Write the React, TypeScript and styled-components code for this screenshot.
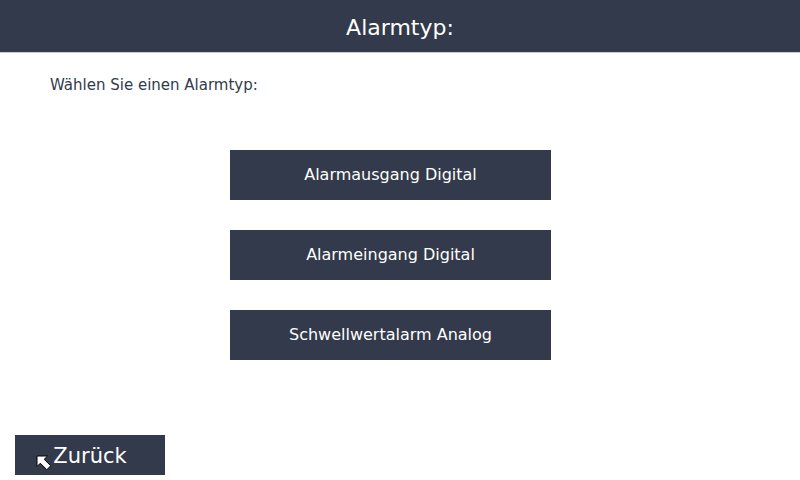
import * as React from 'react';
import styled, { createGlobalStyle } from 'styled-components';

const GlobalStyles = createGlobalStyle`
  html, body {
    margin: 0;
    padding: 0;
    background: #ffffff;
    font-family: 'DejaVu Sans', 'Liberation Sans', sans-serif;
  }

  *, *:before, *:after {
    box-sizing: border-box;
  }
`;

const Screen = styled.div`
  display: flex;
  flex-direction: column;
  width: 800px;
  height: 480px;
  overflow: hidden;
  background: #ffffff;
`;

const Header = styled.div`
  display: flex;
  justify-content: center;
  align-items: center;
  height: 53px;
  padding-top: 2px;
  background: #323a4b;
  border-bottom: 1px solid #c9ccd3;
  color: #ffffff;
  font-size: 22px;
`;

const Body = styled.div`
  display: flex;
  flex-direction: column;
  flex: 1;
`;

const Prompt = styled.div`
  margin: 23px 0 0 50px;
  color: #323a4b;
  font-size: 15px;
  line-height: 18px;
`;

const Options = styled.div`
  display: flex;
  flex-direction: column;
  gap: 30px;
  margin: 56px 0 0 230px;
`;

const OptionButton = styled.div`
  display: flex;
  justify-content: center;
  align-items: center;
  width: 321px;
  height: 50px;
  padding-bottom: 2px;
  background: #323a4b;
  color: #ffffff;
  font-size: 16px;
  cursor: pointer;
`;

const Footer = styled.div`
  display: flex;
  margin-top: auto;
  padding: 0 0 5px 15px;
`;

const BackButton = styled.div`
  position: relative;
  display: flex;
  justify-content: center;
  align-items: center;
  width: 150px;
  height: 40px;
  padding-top: 1px;
  background: #323a4b;
  color: #ffffff;
  font-size: 21px;
  cursor: pointer;
`;

const Pointer = styled.svg`
  position: absolute;
  left: 21px;
  top: 20px;
`;

const options = ['Alarmausgang Digital', 'Alarmeingang Digital', 'Schwellwertalarm Analog'];

export default function App() {
  return (
    <React.Fragment>
      <GlobalStyles />
      <Screen>
        <Header>Alarmtyp:</Header>
        <Body>
          <Prompt>Wählen Sie einen Alarmtyp:</Prompt>
          <Options>
            {options.map(label => (
              <OptionButton key={label}>{label}</OptionButton>
            ))}
          </Options>
          <Footer>
            <BackButton>
              Zurück
              <Pointer width="17" height="17" viewBox="0 0 17 17">
                <path
                  d="M1 1 L1 11.5 L4.3 8.2 L10.8 14.7 L14.7 10.8 L8.2 4.3 L11.5 1 Z"
                  fill="#ffffff"
                  stroke="#000000"
                  strokeWidth="1"
                  strokeLinejoin="miter"
                />
              </Pointer>
            </BackButton>
          </Footer>
        </Body>
      </Screen>
    </React.Fragment>
  );
}
